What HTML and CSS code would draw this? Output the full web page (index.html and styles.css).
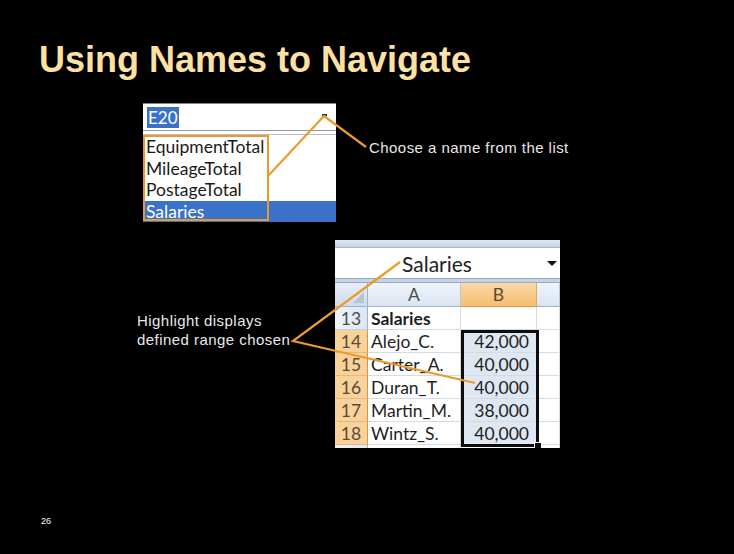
FILE: index.html
```html
<!DOCTYPE html>
<html>
<head>
<meta charset="utf-8">
<link rel="stylesheet" href="styles.css">
</head>
<body>
<div class="slide">
  <h1 class="title">Using Names to Navigate</h1>

  <div class="namebox">
    <div class="nb-input"><span class="nb-sel">E20</span><span class="nb-arrow"></span></div>
    <div class="nb-sep"></div>
    <div class="nb-list">
      <div class="nb-item">EquipmentTotal</div>
      <div class="nb-item">MileageTotal</div>
      <div class="nb-item">PostageTotal</div>
      <div class="nb-item nb-active">Salaries</div>
      <div class="nb-frame"></div>
    </div>
  </div>

  <div class="label label-choose">Choose a name from the list</div>
  <div class="label label-highlight">Highlight displays<br>defined range chosen</div>

  <div class="excel">
    <div class="xl-strip"></div>
    <div class="xl-namebox"><span class="xl-name">Salaries</span><span class="xl-arrow"></span></div>
    <div class="xl-bar"></div>
    <div class="xl-grid">
      <div class="c corner"><span class="corner-tri"></span></div>
      <div class="c colhead">A</div>
      <div class="c colhead colsel">B</div>
      <div class="c colhead"></div>

      <div class="c rowhead">13</div>
      <div class="c cell bold">Salaries</div>
      <div class="c cell"></div>
      <div class="c cell"></div>

      <div class="c rowhead rowsel">14</div>
      <div class="c cell">Alejo_C.</div>
      <div class="c cell num">42,000</div>
      <div class="c cell"></div>

      <div class="c rowhead rowsel">15</div>
      <div class="c cell">Carter_A.</div>
      <div class="c cell num">40,000</div>
      <div class="c cell"></div>

      <div class="c rowhead rowsel">16</div>
      <div class="c cell">Duran_T.</div>
      <div class="c cell num">40,000</div>
      <div class="c cell"></div>

      <div class="c rowhead rowsel">17</div>
      <div class="c cell">Martin_M.</div>
      <div class="c cell num">38,000</div>
      <div class="c cell"></div>

      <div class="c rowhead rowsel">18</div>
      <div class="c cell">Wintz_S.</div>
      <div class="c cell num">40,000</div>
      <div class="c cell"></div>

      <div class="c rowhead"></div>
      <div class="c cell"></div>
      <div class="c cell"></div>
      <div class="c cell"></div>

      <div class="selection"><span class="fill-handle"></span></div>
    </div>
  </div>

  <svg class="callouts" width="734" height="554" viewBox="0 0 734 554">
    <polyline points="268,176 324,116 366,147" />
    <polyline points="400,262 293,341 475,383" />
  </svg>

  <div class="pagenum">26</div>
</div>
</body>
</html>
```

FILE: styles.css
```css
html, body {
  margin: 0;
  padding: 0;
  background: #000;
}

.slide {
  position: relative;
  width: 734px;
  height: 554px;
  background: #000;
  overflow: hidden;
  font-family: "Liberation Sans", Arial, sans-serif;
}

.title {
  margin: 0;
  padding: 40px 0 0 39px;
  font-family: "Liberation Sans", Arial, sans-serif;
  font-weight: bold;
  font-size: 36px;
  line-height: 40px;
  color: #fce1a3;
}

/* ---------- Name box drop-down screenshot ---------- */
.namebox {
  position: absolute;
  left: 143px;
  top: 103px;
  width: 193px;
  height: 119px;
  background: #fff;
  border-top: 1px solid #7a8696;
  box-sizing: border-box;
  display: flex;
  flex-direction: column;
  font-family: Lato, "Open Sans", sans-serif;
}

.nb-input {
  height: 26px;
  flex-shrink: 0;
  display: flex;
  align-items: center;
  padding-left: 4px;
  position: relative;
}

.nb-sel {
  background: #3a72c9;
  color: #fff;
  font-size: 17px;
  line-height: 21px;
  padding: 0 1px;
}

.nb-arrow {
  position: absolute;
  right: 9px;
  top: 10px;
  width: 5px;
  height: 2px;
  background: #333;
}

.nb-sep {
  height: 3px;
  flex-shrink: 0;
  border-top: 1px solid #8e9aa8;
  border-bottom: 1px solid #b7bfc9;
  margin-bottom: 1px;
}

.nb-list {
  position: relative;
  flex: 1;
  display: flex;
  flex-direction: column;
}

.nb-item {
  height: 21.5px;
  line-height: 21.5px;
  padding-left: 3px;
  font-size: 17.5px;
  color: #1a1a1a;
}

.nb-active {
  background: #3a72c9;
  color: #fff;
}

.nb-frame {
  position: absolute;
  left: 0;
  top: -1px;
  width: 126px;
  bottom: 1px;
  border: 2px solid #e99a2a;
  box-sizing: border-box;
}

/* ---------- labels ---------- */
.label {
  position: absolute;
  color: #e8e8e8;
  font-size: 15px;
  letter-spacing: 0.45px;
  line-height: 19px;
}

.label-choose {
  left: 369px;
  top: 138px;
}

.label-highlight {
  left: 137px;
  top: 311px;
}

/* ---------- Excel screenshot ---------- */
.excel {
  position: absolute;
  left: 335px;
  top: 240px;
  width: 225px;
  height: 208px;
  background: #fff;
  display: flex;
  flex-direction: column;
  overflow: hidden;
  font-family: Lato, "Open Sans", sans-serif;
}

.xl-strip {
  flex-shrink: 0;
  height: 8px;
  background: linear-gradient(#dfe8f4, #c6d5ea);
  border-bottom: 1px solid #a7b8cf;
  box-sizing: border-box;
}

.xl-namebox {
  flex-shrink: 0;
  height: 30px;
  position: relative;
  display: flex;
  align-items: center;
  padding-left: 67px;
}

.xl-name {
  font-size: 21px;
  color: #222;
}

.xl-arrow {
  position: absolute;
  right: 3px;
  top: 13px;
  width: 0;
  height: 0;
  border-left: 5px solid transparent;
  border-right: 5px solid transparent;
  border-top: 5px solid #111;
}

.xl-bar {
  flex-shrink: 0;
  height: 5px;
  background: #c5d3e6;
  border-top: 1px solid #98aac3;
  border-bottom: 1px solid #98aac3;
  box-sizing: border-box;
}

.xl-grid {
  flex-shrink: 0;
  position: relative;
  display: grid;
  grid-template-columns: 33px 93px 76px 1fr;
  grid-template-rows: 24px repeat(7, 23px);
  font-size: 17.5px;
}

.c {
  box-sizing: border-box;
  border-right: 1px solid #d4dbe6;
  border-bottom: 1px solid #d4dbe6;
  display: flex;
  align-items: center;
  white-space: nowrap;
  overflow: hidden;
}

.corner {
  background: linear-gradient(#e6eef8, #cfdcec);
  border-right: 1px solid #9fb2cc;
  border-bottom: 1px solid #9fb2cc;
  position: relative;
}

.corner-tri {
  position: absolute;
  right: 3px;
  bottom: 3px;
  width: 0;
  height: 0;
  border-left: 11px solid transparent;
  border-bottom: 11px solid #b3c4da;
}

.colhead {
  justify-content: center;
  background: linear-gradient(#f1f5fb, #dae4f1);
  color: #4c4c4c;
  border-right: 1px solid #b6c6dc;
  border-bottom: 1px solid #9fb2cc;
}

.colsel {
  background: linear-gradient(#fbd9a5, #f4be72);
  color: #5a4a33;
  border-right: 1px solid #e2a85e;
  border-bottom: 1px solid #d6953f;
}

.rowhead {
  justify-content: center;
  background: linear-gradient(90deg, #eef3fa, #dde6f2);
  color: #4c4c4c;
  border-right: 1px solid #9fb2cc;
  border-bottom: 1px solid #c2cfe0;
}

.rowsel {
  background: #f9d29b;
  color: #5a4a33;
  border-right: 1px solid #d6953f;
  border-bottom: 1px solid #e9b877;
}

.cell {
  padding-left: 3px;
  color: #1e1e1e;
}

.bold {
  font-weight: bold;
}

.num {
  justify-content: flex-end;
  padding-right: 7px;
  padding-left: 0;
  background: #dfe7f2;
}

.selection {
  position: absolute;
  left: 126px;
  top: 47px;
  width: 78px;
  height: 117px;
  border: 3px solid #0d0d0d;
  box-sizing: border-box;
  pointer-events: none;
}

.fill-handle {
  position: absolute;
  right: -6px;
  bottom: -6px;
  width: 6px;
  height: 6px;
  background: #0d0d0d;
  border: 1px solid #fff;
}

/* ---------- callout lines ---------- */
.callouts {
  position: absolute;
  left: 0;
  top: 0;
  pointer-events: none;
}

.callouts polyline {
  fill: none;
  stroke: #eb9b2c;
  stroke-width: 2.2;
  stroke-linejoin: miter;
}

.pagenum {
  position: absolute;
  left: 41px;
  top: 516px;
  font-size: 9px;
  line-height: 11px;
  color: #fff;
}
```
